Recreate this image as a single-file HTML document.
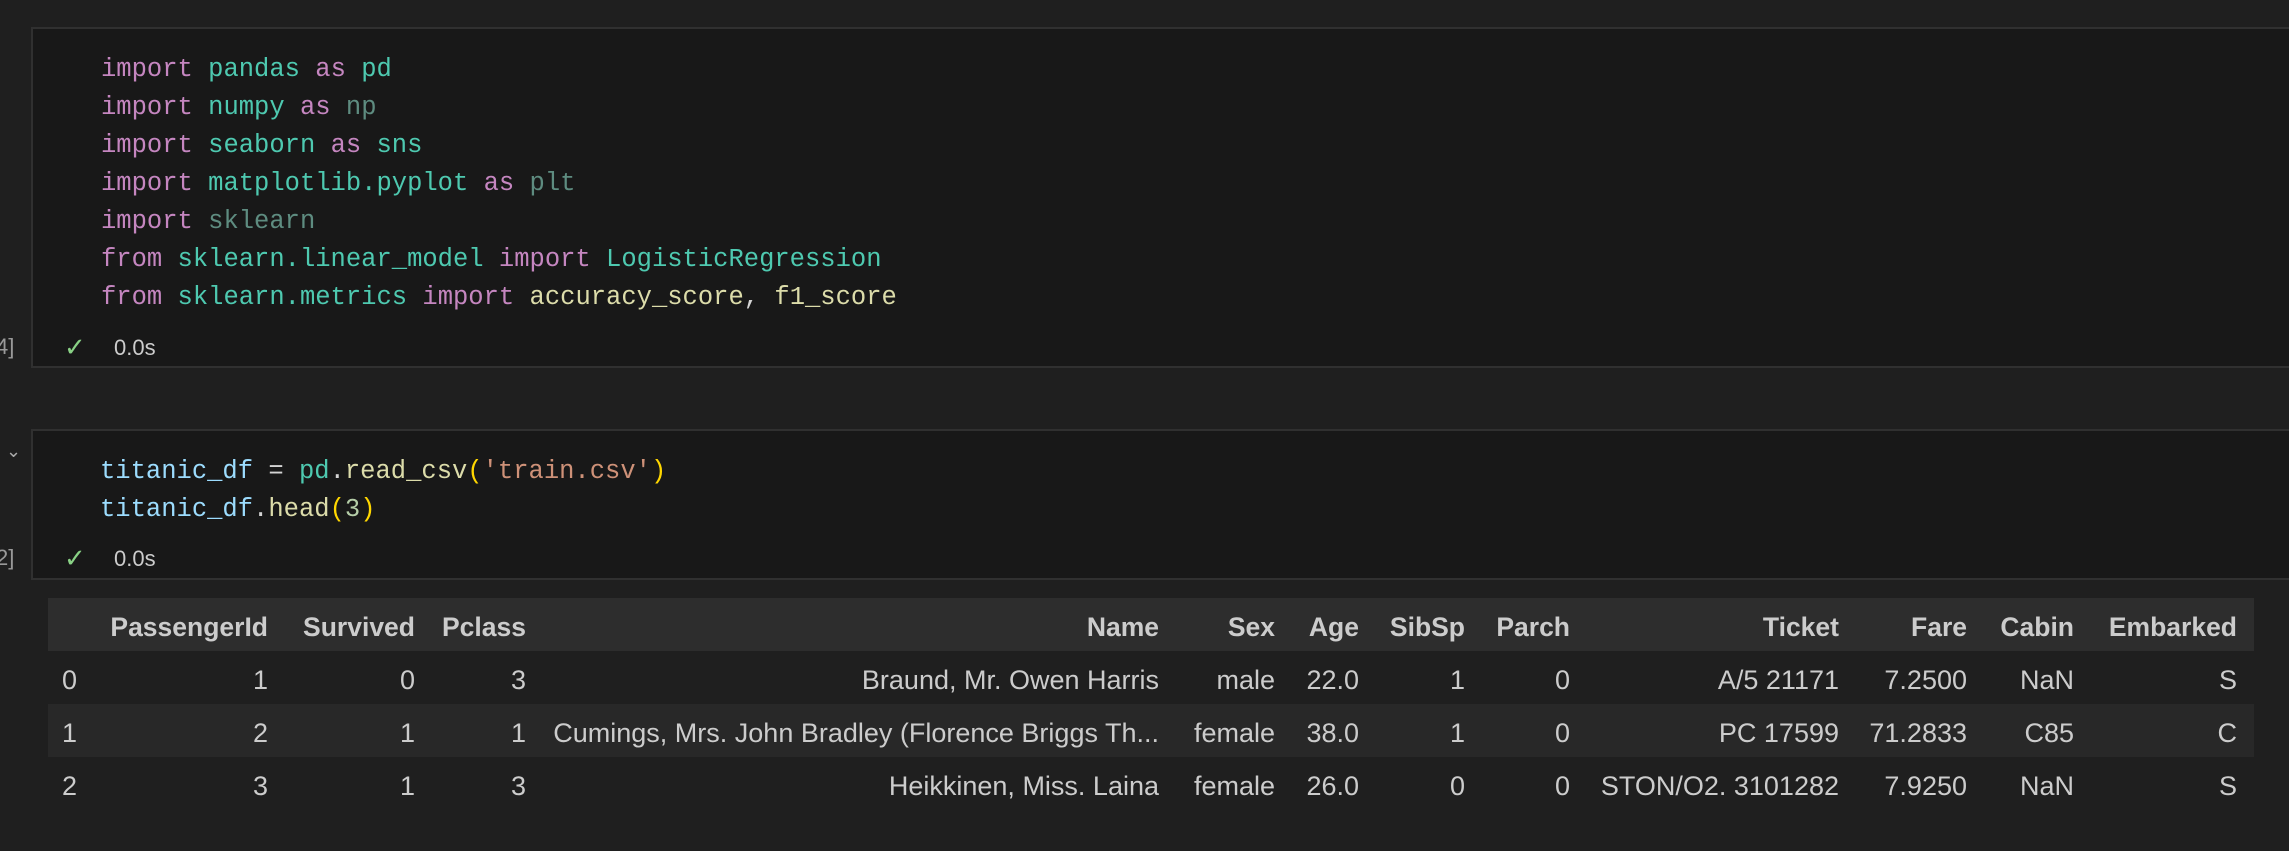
<!DOCTYPE html>
<html><head><style>
body{margin:0;width:2289px;height:851px;background:#1f1f1f;overflow:hidden;position:relative;font-family:"Liberation Sans",sans-serif;}
.cell{position:absolute;left:31px;width:2270px;background:#181818;border:2px solid #303030;box-sizing:border-box;}
.code{position:absolute;left:101px;font-family:"Liberation Mono",monospace;font-size:25.5px;line-height:38px;height:38px;white-space:pre;color:#d4d4d4;}
.k{color:#c586c0}.m{color:#4ec9b0}.d{color:#5e8c80}.v{color:#9cdcfe}.f{color:#dcdcaa}.s{color:#ce9178}.n{color:#b5cea8}.p{color:#ffd700}
.st{position:absolute;font-size:22px;color:#cccccc;line-height:30px}
.ck{position:absolute;color:#89d185;font-size:26px;line-height:30px}
.t{position:absolute;font-size:27px;line-height:30px;color:#cccccc;white-space:nowrap}
.h{font-weight:bold;font-size:26.5px}
</style></head><body>
<div class="cell" style="top:27px;height:341px"></div>
<div class="code" style="top:51px"><span class="k">import</span> <span class="m">pandas</span> <span class="k">as</span> <span class="m">pd</span></div>
<div class="code" style="top:89px"><span class="k">import</span> <span class="m">numpy</span> <span class="k">as</span> <span class="d">np</span></div>
<div class="code" style="top:127px"><span class="k">import</span> <span class="m">seaborn</span> <span class="k">as</span> <span class="m">sns</span></div>
<div class="code" style="top:165px"><span class="k">import</span> <span class="m">matplotlib.pyplot</span> <span class="k">as</span> <span class="d">plt</span></div>
<div class="code" style="top:203px"><span class="k">import</span> <span class="d">sklearn</span></div>
<div class="code" style="top:241px"><span class="k">from</span> <span class="m">sklearn.linear_model</span> <span class="k">import</span> <span class="m">LogisticRegression</span></div>
<div class="code" style="top:279px"><span class="k">from</span> <span class="m">sklearn.metrics</span> <span class="k">import</span> <span class="f">accuracy_score</span>, <span class="f">f1_score</span></div>
<div class="st" style="left:-4px;top:332px;color:#999">4]</div>
<div class="ck" style="left:64px;top:332px">✓</div>
<div class="st" style="left:114px;top:333px">0.0s</div>

<div class="cell" style="top:429px;height:151px"></div>
<div class="st" style="left:6px;top:436px;color:#aaa;font-size:18px">&#8964;</div>
<div class="code" style="top:453px;left:100px"><span class="v">titanic_df</span> = <span class="m">pd</span>.<span class="f">read_csv</span><span class="p">(</span><span class="s">'train.csv'</span><span class="p">)</span></div>
<div class="code" style="top:491px;left:100px"><span class="v">titanic_df</span>.<span class="f">head</span><span class="p">(</span><span class="n">3</span><span class="p">)</span></div>
<div class="st" style="left:-4px;top:543px;color:#999">2]</div>
<div class="ck" style="left:64px;top:543px">✓</div>
<div class="st" style="left:114px;top:544px">0.0s</div>

<div style="position:absolute;left:48px;top:598px;width:2206px;height:53px;background:#2d2d2d"></div>
<div style="position:absolute;left:48px;top:704px;width:2206px;height:53px;background:#282828"></div>

<div class="t h" style="right:2021px;top:612px">PassengerId</div>
<div class="t h" style="right:1874px;top:612px">Survived</div>
<div class="t h" style="right:1763px;top:612px">Pclass</div>
<div class="t h" style="right:1130px;top:612px">Name</div>
<div class="t h" style="right:1014px;top:612px">Sex</div>
<div class="t h" style="right:930px;top:612px">Age</div>
<div class="t h" style="right:824px;top:612px">SibSp</div>
<div class="t h" style="right:719px;top:612px">Parch</div>
<div class="t h" style="right:450px;top:612px">Ticket</div>
<div class="t h" style="right:322px;top:612px">Fare</div>
<div class="t h" style="right:215px;top:612px">Cabin</div>
<div class="t h" style="right:52px;top:612px">Embarked</div>

<div class="t" style="left:62px;top:665px">0</div>
<div class="t" style="right:2021px;top:665px">1</div>
<div class="t" style="right:1874px;top:665px">0</div>
<div class="t" style="right:1763px;top:665px">3</div>
<div class="t" style="right:1130px;top:665px">Braund, Mr. Owen Harris</div>
<div class="t" style="right:1014px;top:665px">male</div>
<div class="t" style="right:930px;top:665px">22.0</div>
<div class="t" style="right:824px;top:665px">1</div>
<div class="t" style="right:719px;top:665px">0</div>
<div class="t" style="right:450px;top:665px">A/5 21171</div>
<div class="t" style="right:322px;top:665px">7.2500</div>
<div class="t" style="right:215px;top:665px">NaN</div>
<div class="t" style="right:52px;top:665px">S</div>

<div class="t" style="left:62px;top:718px">1</div>
<div class="t" style="right:2021px;top:718px">2</div>
<div class="t" style="right:1874px;top:718px">1</div>
<div class="t" style="right:1763px;top:718px">1</div>
<div class="t" style="right:1130px;top:718px">Cumings, Mrs. John Bradley (Florence Briggs Th...</div>
<div class="t" style="right:1014px;top:718px">female</div>
<div class="t" style="right:930px;top:718px">38.0</div>
<div class="t" style="right:824px;top:718px">1</div>
<div class="t" style="right:719px;top:718px">0</div>
<div class="t" style="right:450px;top:718px">PC 17599</div>
<div class="t" style="right:322px;top:718px">71.2833</div>
<div class="t" style="right:215px;top:718px">C85</div>
<div class="t" style="right:52px;top:718px">C</div>

<div class="t" style="left:62px;top:771px">2</div>
<div class="t" style="right:2021px;top:771px">3</div>
<div class="t" style="right:1874px;top:771px">1</div>
<div class="t" style="right:1763px;top:771px">3</div>
<div class="t" style="right:1130px;top:771px">Heikkinen, Miss. Laina</div>
<div class="t" style="right:1014px;top:771px">female</div>
<div class="t" style="right:930px;top:771px">26.0</div>
<div class="t" style="right:824px;top:771px">0</div>
<div class="t" style="right:719px;top:771px">0</div>
<div class="t" style="right:450px;top:771px">STON/O2. 3101282</div>
<div class="t" style="right:322px;top:771px">7.9250</div>
<div class="t" style="right:215px;top:771px">NaN</div>
<div class="t" style="right:52px;top:771px">S</div>
</body></html>
